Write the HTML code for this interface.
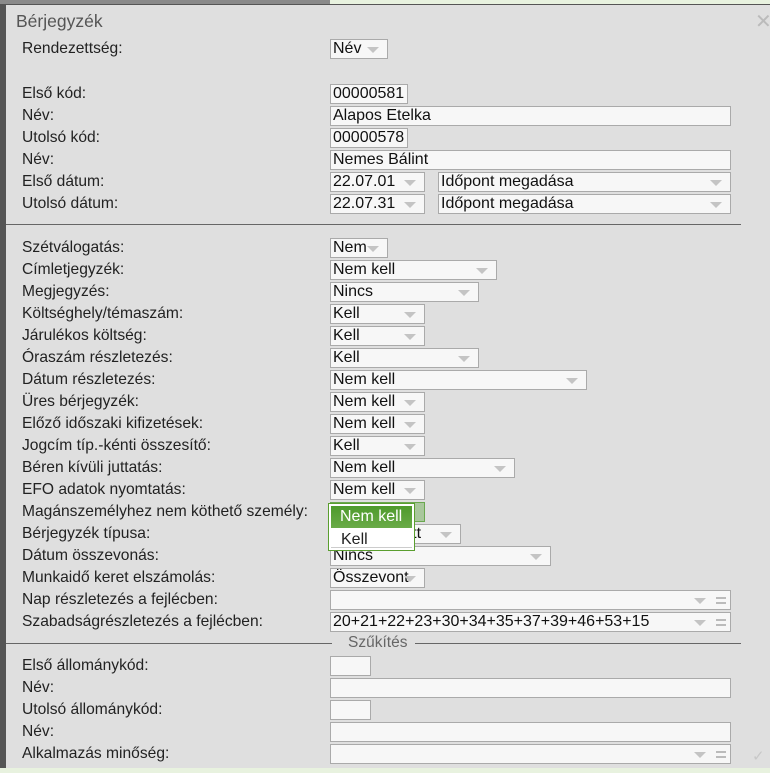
<!DOCTYPE html>
<html><head><meta charset="utf-8"><style>
*{margin:0;padding:0;box-sizing:border-box}
body{width:770px;height:773px;overflow:hidden;position:relative;background:#e8f2df;font-family:"Liberation Sans",Arial,sans-serif}
.top{position:absolute;left:0;top:0;width:330px;height:5px;background:#8a8a8a}
.dlg{position:absolute;left:0;top:4px;width:770px;height:764px;background:#dfdfdf;border-top:1px solid #555;border-left:6px solid #555}
.t{position:absolute;left:10px;top:6px;font-size:17.5px;color:#555}
.x{position:absolute;left:749px;top:4px;font-size:20px;color:#bbb}
.l{position:absolute;left:16px;font-size:15.6px;color:#222;margin-top:-1px}
.c{position:absolute;height:20px;background:#f7f7f7;border:1px solid #aaa;font-size:16px;line-height:18px;padding-left:2px;color:#111;white-space:nowrap;overflow:hidden}
.c.s::after{content:"";position:absolute;right:8px;top:7px;border-left:6px solid transparent;border-right:6px solid transparent;border-top:6px solid #c4c4c4}
.c.e::after{right:24px}
.c.e::before{content:"";position:absolute;right:4px;top:6px;width:10px;height:3px;border-top:2px solid #bbb;border-bottom:2px solid #bbb}
.hr{position:absolute;height:1px;background:#666}
</style></head><body>
<div class="top"></div>
<div class="dlg">
<div class="t">Bérjegyzék</div>
<div class="x">✕</div>

<div class="l" style="top:36px">Rendezettség:</div><div class="c s" style="left:324px;top:34px;width:58px">Név</div>

<div class="l" style="top:81px">Első kód:</div><div class="c" style="left:324px;top:79px;width:78px">00000581</div>
<div class="l" style="top:103px">Név:</div><div class="c" style="left:324px;top:101px;width:401px">Alapos Etelka</div>
<div class="l" style="top:125px">Utolsó kód:</div><div class="c" style="left:324px;top:123px;width:78px">00000578</div>
<div class="l" style="top:147px">Név:</div><div class="c" style="left:324px;top:145px;width:401px">Nemes Bálint</div>
<div class="l" style="top:169px">Első dátum:</div><div class="c s" style="left:324px;top:167px;width:95px">22.07.01</div><div class="c s" style="left:432px;top:167px;width:293px">Időpont megadása</div>
<div class="l" style="top:191px">Utolsó dátum:</div><div class="c s" style="left:324px;top:189px;width:95px">22.07.31</div><div class="c s" style="left:432px;top:189px;width:293px">Időpont megadása</div>

<div class="hr" style="left:0;top:219px;width:735px"></div>

<div class="l" style="top:235px">Szétválogatás:</div><div class="c s" style="left:324px;top:233px;width:58px">Nem</div>
<div class="l" style="top:257px">Címletjegyzék:</div><div class="c s" style="left:324px;top:255px;width:167px">Nem kell</div>
<div class="l" style="top:279px">Megjegyzés:</div><div class="c s" style="left:324px;top:277px;width:149px">Nincs</div>
<div class="l" style="top:301px">Költséghely/témaszám:</div><div class="c s" style="left:324px;top:299px;width:95px">Kell</div>
<div class="l" style="top:323px">Járulékos költség:</div><div class="c s" style="left:324px;top:321px;width:95px">Kell</div>
<div class="l" style="top:345px">Óraszám részletezés:</div><div class="c s" style="left:324px;top:343px;width:149px">Kell</div>
<div class="l" style="top:367px">Dátum részletezés:</div><div class="c s" style="left:324px;top:365px;width:257px">Nem kell</div>
<div class="l" style="top:389px">Üres bérjegyzék:</div><div class="c s" style="left:324px;top:387px;width:95px">Nem kell</div>
<div class="l" style="top:411px">Előző időszaki kifizetések:</div><div class="c s" style="left:324px;top:409px;width:95px">Nem kell</div>
<div class="l" style="top:433px">Jogcím típ.-kénti összesítő:</div><div class="c s" style="left:324px;top:431px;width:95px">Kell</div>
<div class="l" style="top:455px">Béren kívüli juttatás:</div><div class="c s" style="left:324px;top:453px;width:185px">Nem kell</div>
<div class="l" style="top:477px">EFO adatok nyomtatás:</div><div class="c s" style="left:324px;top:475px;width:95px">Nem kell</div>
<div class="l" style="top:499px">Magánszemélyhez nem köthető személy:</div><div class="c s" style="left:324px;top:497px;width:95px;background:#a9c79c;border-color:#6aa84f"></div>
<div class="l" style="top:521px">Bérjegyzék típusa:</div><div class="c s" style="left:324px;top:519px;width:131px">Részletezett</div>
<div class="l" style="top:543px">Dátum összevonás:</div><div class="c s" style="left:324px;top:541px;width:221px">Nincs</div>
<div class="l" style="top:565px">Munkaidő keret elszámolás:</div><div class="c s" style="left:324px;top:563px;width:95px">Összevont</div>
<div class="l" style="top:587px">Nap részletezés a fejlécben:</div><div class="c s e" style="left:324px;top:585px;width:401px"></div>
<div class="l" style="top:609px">Szabadságrészletezés a fejlécben:</div><div class="c s e" style="left:324px;top:607px;width:401px">20+21+22+23+30+34+35+37+39+46+53+15</div>

<div class="hr" style="left:0;top:638px;width:326px"></div>
<div style="position:absolute;left:342px;top:629px;font-size:15.5px;color:#666">Szűkítés</div>
<div class="hr" style="left:409px;top:638px;width:326px"></div>

<div class="l" style="top:653px">Első állománykód:</div><div class="c" style="left:324px;top:651px;width:41px"></div>
<div class="l" style="top:675px">Név:</div><div class="c" style="left:324px;top:673px;width:401px"></div>
<div class="l" style="top:697px">Utolsó állománykód:</div><div class="c" style="left:324px;top:695px;width:41px"></div>
<div class="l" style="top:719px">Név:</div><div class="c" style="left:324px;top:717px;width:401px"></div>
<div class="l" style="top:741px">Alkalmazás minőség:</div><div class="c s e" style="left:324px;top:739px;width:401px"></div>
<div style="position:absolute;left:746px;top:742px;font-size:15px;color:#c8c8c8">✓</div>

<div style="position:absolute;left:322px;top:498px;width:87px;height:48px;background:#fff;border:1px solid #5a9e2f">
<div style="position:absolute;left:2px;top:2px;width:81px;height:22px;background:linear-gradient(#4e9a2c,#6aab48);color:#fff;font-size:16px;line-height:22px;padding-left:9px">Nem kell</div>
<div style="position:absolute;left:12px;top:27px;font-size:16px;color:#222">Kell</div>
<div style="position:absolute;left:2px;bottom:2px;width:81px;height:1px;background:#ccc"></div>
</div>
</div>
</body></html>
